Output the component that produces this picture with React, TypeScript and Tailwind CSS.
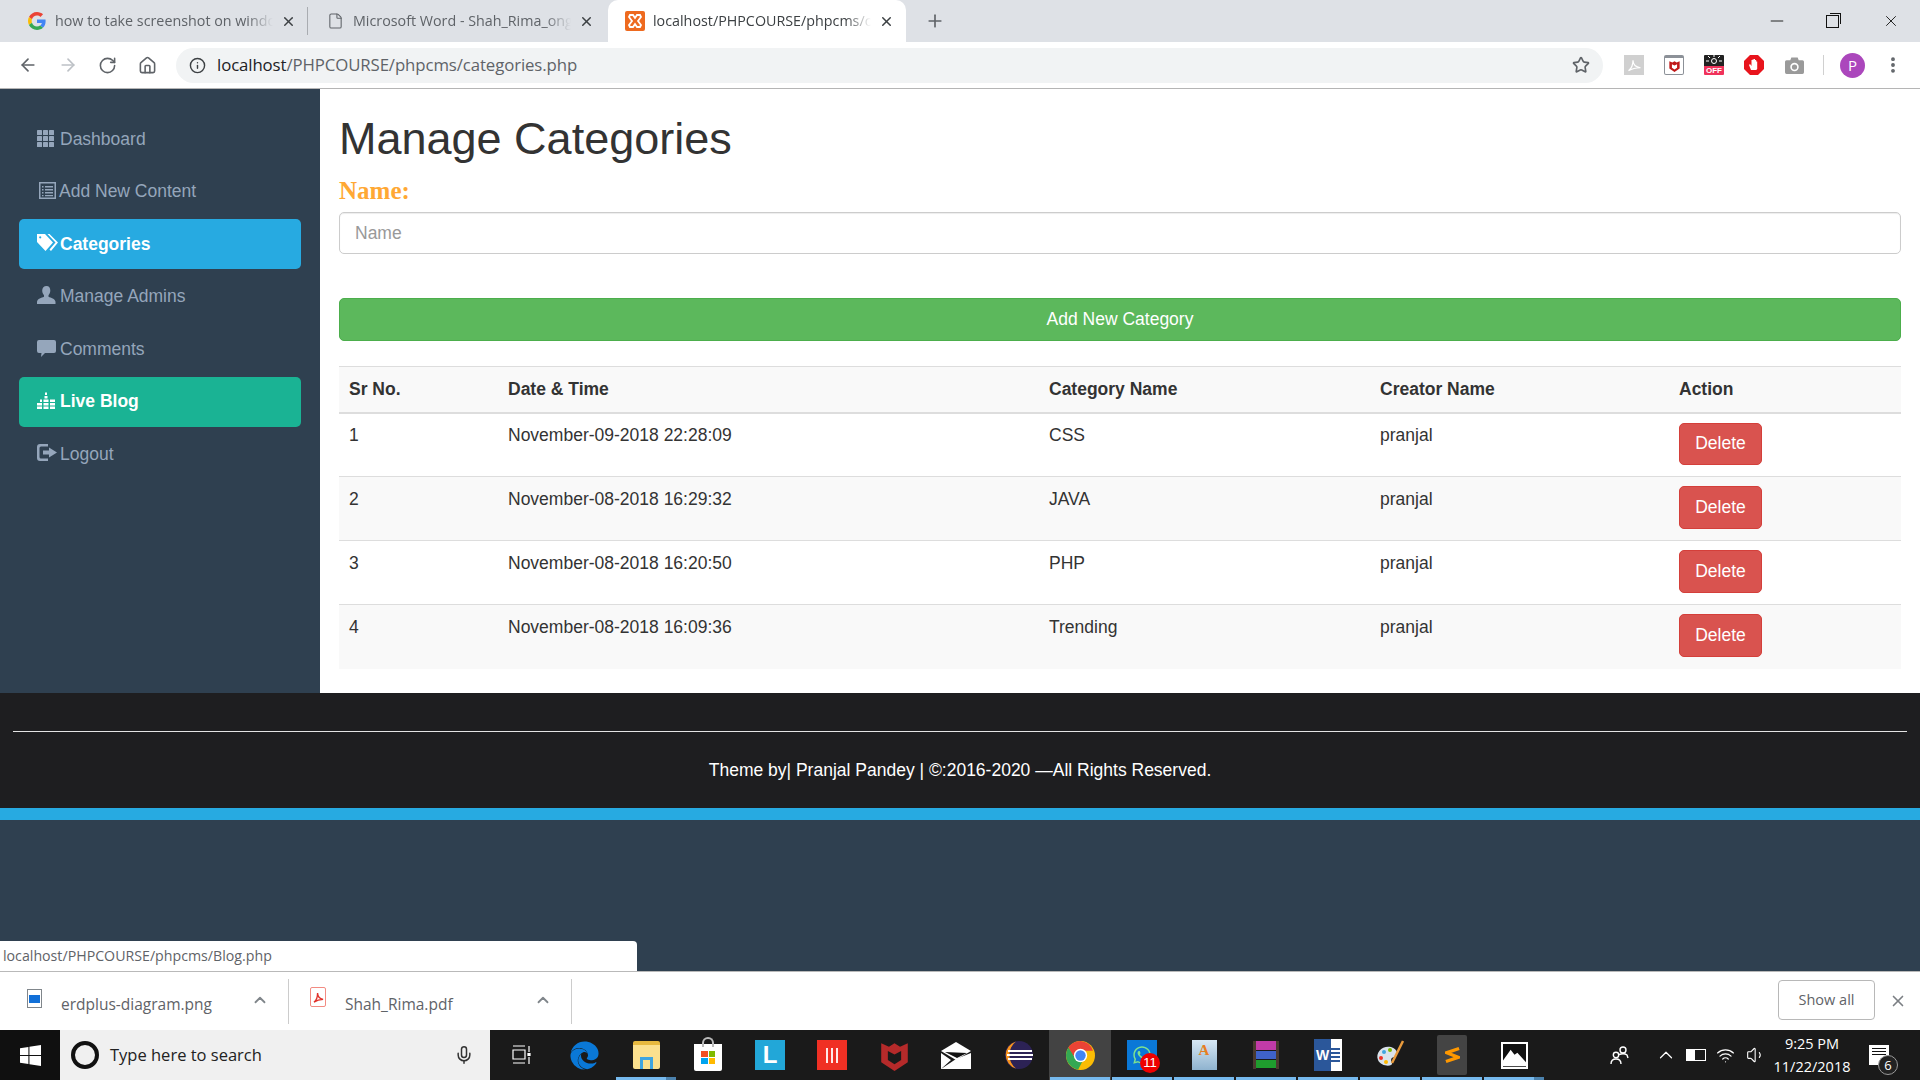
import React from 'react';
import { ArrowLeft, ArrowRight, RotateCw, Home, Info, Star, MoreVertical, X, Plus, Minus, ChevronUp, Mic, File, Wifi, Volume1 } from 'lucide-react';
import { FaEdge, FaWhatsapp } from 'react-icons/fa';

const rows = [
  { id: 1, date: 'November-09-2018 22:28:09', name: 'CSS' },
  { id: 2, date: 'November-08-2018 16:29:32', name: 'JAVA' },
  { id: 3, date: 'November-08-2018 16:20:50', name: 'PHP' },
  { id: 4, date: 'November-08-2018 16:09:36', name: 'Trending' },
];

const GoogleG = () => (
  <svg viewBox="0 0 48 48" className="w-[18px] h-[18px]">
    <path fill="#EA4335" d="M24 9.5c3.54 0 6.71 1.22 9.21 3.6l6.85-6.85C35.9 2.38 30.47 0 24 0 14.62 0 6.51 5.38 2.56 13.22l7.98 6.19C12.43 13.72 17.74 9.5 24 9.5z" />
    <path fill="#4285F4" d="M46.98 24.55c0-1.57-.15-3.09-.38-4.55H24v9.02h12.94c-.58 2.96-2.26 5.48-4.78 7.18l7.73 6c4.51-4.18 7.09-10.36 7.09-17.65z" />
    <path fill="#FBBC05" d="M10.53 28.59c-.48-1.45-.76-2.99-.76-4.59s.27-3.14.76-4.59l-7.98-6.19C.92 16.46 0 20.12 0 24c0 3.88.92 7.54 2.56 10.78l7.97-6.19z" />
    <path fill="#34A853" d="M24 48c6.48 0 11.93-2.13 15.89-5.81l-7.73-6c-2.15 1.45-4.92 2.3-8.16 2.3-6.26 0-11.57-4.22-13.47-9.91l-7.98 6.19C6.51 42.62 14.62 48 24 48z" />
  </svg>
);

const Xampp = () => (
  <svg viewBox="0 0 20 20" className="w-5 h-5">
    <rect width="20" height="20" rx="2" fill="#ee6a1f" />
    <path d="M5 4h3l2 3 2-3h3l1 2-3 4 3 4-1 2h-3l-2-3-2 3H5l-1-2 3-4-3-4z" fill="none" stroke="#fff" strokeWidth="1.8" />
  </svg>
);

const McAfeeShield = ({ className, color }: { className: string; color: string }) => (
  <svg viewBox="0 0 24 28" className={className}>
    <path d="M0 3l7 3 5-3 5 3 7-3v17l-12 8L0 20z M6 10v8l6 4 6-4v-8l-6 3z" fill={color} fillRule="evenodd" />
  </svg>
);

const Tab = ({ icon, title, active }: { icon: React.ReactNode; title: string; active?: boolean }) => (
  <div className={`flex items-center h-[42px] w-[298px] pl-[17px] pr-[12px] ${active ? 'bg-white rounded-t-[10px] text-[#3c4043]' : 'text-[#5f6368]'}`}>
    <div className="w-[20px] flex justify-center shrink-0">{icon}</div>
    <div className="ml-[8px] w-[218px] overflow-hidden whitespace-nowrap text-[14.3px] [mask-image:linear-gradient(to_right,black_88%,transparent)]">{title}</div>
    <X className="ml-[8px] w-[15px] h-[15px] shrink-0 text-[#3c4043]" strokeWidth={2.4} />
  </div>
);

const ExtSlot = ({ children }: { children: React.ReactNode }) => (
  <div className="w-[40px] flex justify-center items-center">{children}</div>
);

const BrowserChrome = () => (
  <div className="font-['Open_Sans',sans-serif] shrink-0">
    <div className="h-[42px] bg-[#dee1e6] flex items-center pl-[10px]">
      <Tab icon={<GoogleG />} title="how to take screenshot on windows" />
      <div className="w-px h-[28px] bg-[#a9acb1] -ml-[1px]" />
      <Tab icon={<File className="w-[17px] h-[20px] text-[#5f6368]" strokeWidth={1.5} />} title="Microsoft Word - Shah_Rima_ongoing" />
      <div className="w-[2px]" />
      <Tab active icon={<Xampp />} title="localhost/PHPCOURSE/phpcms/categories.php" />
      <Plus className="ml-[19px] w-[20px] h-[20px] text-[#5f6368]" strokeWidth={2} />
      <div className="flex-1" />
      <Minus className="w-[20px] h-[20px] text-[#111] mr-[39px]" strokeWidth={1.1} />
      <div className="relative w-[13px] h-[13px] border border-[#111] mr-[43px]">
        <div className="absolute -top-[3px] -right-[3px] w-[11px] h-[11px] border-t border-r border-[#111]" />
      </div>
      <X className="w-[18px] h-[18px] text-[#111] mr-[20px]" strokeWidth={1.2} />
    </div>
    <div className="h-[47px] bg-white border-b border-[#b5b5b5] flex items-center pl-[18px] pr-[15px]">
      <ArrowLeft className="w-[20px] h-[20px] text-[#5f6368]" />
      <ArrowRight className="ml-[20px] w-[20px] h-[20px] text-[#bdc1c6]" />
      <RotateCw className="ml-[20px] w-[19px] h-[19px] text-[#5f6368]" />
      <Home className="ml-[21px] w-[19px] h-[19px] text-[#5f6368]" />
      <div className="ml-[19px] w-[1427px] h-[35px] rounded-full bg-[#f1f3f4] flex items-center pl-[13px] pr-[13px]">
        <Info className="w-[17px] h-[17px] text-[#3c4043]" />
        <div className="ml-[11px] text-[16.8px] text-[#5f6368] tracking-[-0.1px]"><span className="text-[#202124]">localhost</span>/PHPCOURSE/phpcms/categories.php</div>
        <div className="flex-1" />
        <Star className="w-[18px] h-[18px] text-[#5f6368]" strokeWidth={2.2} />
      </div>
      <div className="ml-[11px] flex items-center">
        <ExtSlot>
          <div className="w-[20px] h-[20px] bg-[#d0d0d0] flex items-center justify-center">
            <svg viewBox="0 0 20 20" className="w-[15px] h-[15px]"><path d="M2 17c4-3 6-9 6-14 0 5 3 9 10 10-5 0-11 1-16 4z" fill="none" stroke="#fff" strokeWidth="1.6" /></svg>
          </div>
        </ExtSlot>
        <ExtSlot>
          <div className="w-[20px] h-[20px] bg-white border border-[#8c9198] border-t-[3px] rounded-[2px] flex items-center justify-center">
            <McAfeeShield className="w-[11px] h-[12px]" color="#c01818" />
          </div>
        </ExtSlot>
        <ExtSlot>
          <div className="w-[20px] h-[20px] flex flex-col overflow-hidden rounded-[1px]">
            <div className="h-[11px] bg-[#222] flex items-center justify-center">
              <svg viewBox="0 0 20 11" className="w-[20px] h-[11px]" stroke="#fff" strokeWidth="1" fill="none">
                <circle cx="10" cy="6" r="2.500" />
                <path d="M10 0v2M4 1l2 2M16 1l-2 2M2 6h3M15 6h3" />
              </svg>
            </div>
            <div className="h-[9px] bg-[#f0325b] text-white text-[8px] leading-[9px] font-bold text-center font-['Liberation_Sans',sans-serif]">OFF</div>
          </div>
        </ExtSlot>
        <ExtSlot>
          <svg viewBox="0 0 20 20" className="w-[20px] h-[20px]">
            <path d="M6 0h8l6 6v8l-6 6H6l-6-6V6z" fill="#e8141c" />
            <path d="M7 15l-2-5 1-1 1.500 2V5h1v-.5h1.200V4h1.300v1h1.200v1.500h1V14l-1 1z" fill="#fff" />
          </svg>
        </ExtSlot>
        <ExtSlot>
          <svg viewBox="0 0 18 16" className="w-[19px] h-[17px]">
            <path d="M1.500 3H5l1-2.500h6L13 3h3.500A1.500 1.500 0 0 1 18 4.500v10a1.500 1.500 0 0 1-1.500 1.500h-15A1.500 1.500 0 0 1 0 14.500v-10A1.500 1.500 0 0 1 1.500 3z" fill="#9a9a9a" />
            <circle cx="9" cy="9.500" r="4" fill="#fff" />
            <circle cx="9" cy="9.500" r="2.500" fill="#9a9a9a" />
          </svg>
        </ExtSlot>
      </div>
      <div className="ml-[9px] w-px h-[20px] bg-[#d0d0d0]" />
      <div className="ml-[16px] w-[25px] h-[25px] rounded-full bg-[#ab47bc] text-white text-[15px] flex items-center justify-center">P</div>
      <MoreVertical className="ml-[18px] w-[20px] h-[20px] text-[#5f6368]" strokeWidth={2.6} />
    </div>
  </div>
);

const ThIcon = () => (
  <svg viewBox="0 0 17 17" className="w-[17px] h-[17px] -mt-[2px]" fill="currentColor">
    {[0, 6, 12].map((y) => [0, 6, 12].map((x) => <rect key={`${x}-${y}`} x={x} y={y} width="5" height="5" rx="0.6" />))}
  </svg>
);
const ListAltIcon = () => (
  <svg viewBox="0 0 17 17" className="w-[17px] h-[17px] ml-[2px] -mt-[2px]" fill="currentColor">
    <path fillRule="evenodd" d="M0 0h17v17H0z M1.500 1.500v14h14v-14z" />
    <path d="M3 4h1.500v1.500H3zM6 4h8v1.500H6zM3 7h1.500v1.500H3zM6 7h8v1.500H6zM3 10h1.500v1.500H3zM6 10h8v1.500H6zM3 13h1.500v1.200H3zM6 13h8v1.200H6z" />
  </svg>
);
const TagsIcon = () => (
  <svg viewBox="0 0 22 17" className="w-[22px] h-[17px] -mt-[3px]" fill="currentColor">
    <path fillRule="evenodd" d="M0 0h8l8 8.500-7.500 8.500L0 8z M3.200 2.200a1.100 1.100 0 1 0 .01 0z" />
    <path d="M10.500 0h2l8.500 8.500-7 8.500-1.500-1.500 6-7z" />
  </svg>
);
const UserIcon = () => (
  <svg viewBox="0 0 19 18" className="w-[19px] h-[18px] -mt-[3px]" fill="currentColor">
    <path d="M9.500 0c2.600 0 3.800 2 3.800 4.500 0 2-.9 3.700-1.800 4.700v1.500c2.500 1 6.500 2 7 5V18H0v-2.300c.5-3 4.500-4 7-5V9.200C6.100 8.200 5.200 6.500 5.200 4.500 5.200 2 6.900 0 9.500 0z" />
  </svg>
);
const CommentIcon = () => (
  <svg viewBox="0 0 19 18" className="w-[19px] h-[18px] -mt-[1px]" fill="currentColor">
    <path d="M2 0h15a2 2 0 0 1 2 2v9a2 2 0 0 1-2 2H8l-4 4 .5-4H2a2 2 0 0 1-2-2V2a2 2 0 0 1 2-2z" />
  </svg>
);
const EqualizerIcon = () => (
  <svg viewBox="0 0 18 17" className="w-[18px] h-[17px] -mt-[2px]" fill="currentColor">
    <path d="M0 11h5v2.500H0zM0 14.500h5V17H0zM6.500 7.500h5V10h-5zM6.500 11h5v2.500h-5zM6.500 14.500h5V17h-5zM7.500 4h3v2.500h-3zM8 0.500h2V3H8zM13 7.500h5V10h-5zM13 11h5v2.500h-5zM13 14.500h5V17h-5z M3 7.500h2V10H3z" />
  </svg>
);
const LogoutIcon = () => (
  <svg viewBox="0 0 20 17" className="w-[20px] h-[17px] -mt-[3px]" fill="currentColor">
    <path d="M3 0h8v2.500H4a1.500 1.500 0 0 0-1.500 1.500v9A1.500 1.500 0 0 0 4 14.500h7V17H3a3 3 0 0 1-3-3V3a3 3 0 0 1 3-3z" />
    <path d="M12 3.500l8 5-8 5v-3H6v-4h6z" />
  </svg>
);

const navItems = [
  { label: 'Dashboard', icon: <ThIcon />, cls: 'text-[#95a6bb]', gap: 'ml-[6px]' },
  { label: 'Add New Content', icon: <ListAltIcon />, cls: 'text-[#95a6bb]', gap: 'ml-[3px]' },
  { label: 'Categories', icon: <TagsIcon />, cls: 'bg-[#27aae1] text-white font-bold', gap: 'ml-[1px]' },
  { label: 'Manage Admins', icon: <UserIcon />, cls: 'text-[#95a6bb]', gap: 'ml-[4px]' },
  { label: 'Comments', icon: <CommentIcon />, cls: 'text-[#95a6bb]', gap: 'ml-[4px]' },
  { label: 'Live Blog', icon: <EqualizerIcon />, cls: 'bg-[#1ab394] text-white font-bold', gap: 'ml-[5px]' },
  { label: 'Logout', icon: <LogoutIcon />, cls: 'text-[#95a6bb]', gap: 'ml-[3px]' },
];

const Sidebar = () => (
  <div className="w-[320px] shrink-0 bg-[#2f4050] pt-[25px] px-[19px] flex flex-col gap-[2.5px]">
    {navItems.map((item) => (
      <div key={item.label} className={`h-[50px] rounded-[5px] flex items-center pl-[18px] text-[17.5px] ${item.cls}`}>
        {item.icon}
        <span className={item.gap}>{item.label}</span>
      </div>
    ))}
  </div>
);

const CategoryTable = () => (
  <table className="w-full table-fixed border-collapse text-[17.5px] text-[#333] mt-[25px]">
    <colgroup>
      <col className="w-[159px]" />
      <col className="w-[541px]" />
      <col className="w-[331px]" />
      <col className="w-[299px]" />
      <col />
    </colgroup>
    <thead>
      <tr className="h-[46px] bg-[#f9f9f9] border-t border-b-2 border-[#ddd] text-left">
        <th className="px-[10px]">Sr No.</th>
        <th className="px-[10px]">Date &amp; Time</th>
        <th className="px-[10px]">Category Name</th>
        <th className="px-[10px]">Creator Name</th>
        <th className="px-[10px]">Action</th>
      </tr>
    </thead>
    <tbody>
      {rows.map((row) => (
        <tr key={row.id} className={`h-[64px] border-t border-[#ddd] first:border-t-0 ${row.id % 2 === 0 ? 'bg-[#f9f9f9]' : 'bg-white'}`}>
          <td className="px-[10px] pt-[9.5px] align-top leading-[25px]">{row.id}</td>
          <td className="px-[10px] pt-[9.5px] align-top leading-[25px]">{row.date}</td>
          <td className="px-[10px] pt-[9.5px] align-top leading-[25px]">{row.name}</td>
          <td className="px-[10px] pt-[9.5px] align-top leading-[25px]">pranjal</td>
          <td className="px-[10px] pt-[9px] align-top leading-[25px]">
            <button className="w-[83px] h-[42.500px] rounded-[5px] bg-[#d9534f] border border-[#d43f3a] text-white">Delete</button>
          </td>
        </tr>
      ))}
    </tbody>
  </table>
);

const Content = () => (
  <div className="flex-1 bg-white px-[19px] pt-[25px]">
    <h1 className="text-[45px] leading-[50px] text-[#333]">Manage Categories</h1>
    <div className="mt-[9px] h-[36px] leading-[36px] text-[25px] font-bold text-[#ffa834] font-['Liberation_Serif',serif]">Name:</div>
    <input
      placeholder="Name"
      className="mt-[3px] w-full h-[42px] rounded-[5px] border border-[#ccc] px-[15px] text-[17.5px] placeholder:text-[#999] shadow-[inset_0_1px_1px_rgba(0,0,0,0.075)]"
    />
    <button className="mt-[44px] w-full h-[43px] rounded-[5px] bg-[#5cb85c] border border-[#4cae4c] text-white text-[17.5px]">Add New Category</button>
    <CategoryTable />
  </div>
);

const Footer = () => (
  <div className="shrink-0">
    <div className="h-[115px] bg-[#1e1e20] pt-[38px] text-white">
      <div className="mx-[13px] h-px bg-[#e4e4e4]" />
      <div className="mt-[26px] text-center text-[17.5px] leading-[25px]">Theme by| Pranjal Pandey | ©:2016-2020 —All Rights Reserved.</div>
    </div>
    <div className="h-[12px] bg-[#27aae1]" />
  </div>
);

const DownloadItem = ({ icon, name, width }: { icon: React.ReactNode; name: string; width: string }) => (
  <div className={`h-[45px] flex items-center border-r border-[#ccc] ${width}`}>
    {icon}
    <span className="text-[15.500px] text-[#5f6368] ml-[19px] flex-1 mt-[7px]">{name}</span>
    <ChevronUp className="w-[18px] h-[18px] text-[#80868b] mr-[19px] -mt-[3px]" strokeWidth={2.4} />
  </div>
);

const DownloadBar = () => (
  <div className="h-[59px] shrink-0 bg-white border-t border-[#b9b9b9] flex items-center pl-[27px] font-['Open_Sans',sans-serif]">
    <DownloadItem
      width="w-[262px]"
      name="erdplus-diagram.png"
      icon={
        <div className="w-[15px] h-[19px] -mt-[6px] border border-[#80868b] flex items-center justify-center pt-[1px]">
          <div className="w-[11px] h-[8px] bg-[#1270d8]" />
        </div>
      }
    />
    <div className="w-[21px]" />
    <DownloadItem
      width="w-[262px]"
      name="Shah_Rima.pdf"
      icon={
        <div className="w-[16px] h-[20px] -mt-[8px] border border-[#f28b82] rounded-[2px] flex items-center justify-center">
          <svg viewBox="0 0 12 12" className="w-[11px] h-[11px]"><path d="M1 11c3-2 4-6 4-10 0 4 2 6 6 7-4 0-7 1-10 3z" fill="none" stroke="#e0312a" strokeWidth="1.500" /></svg>
        </div>
      }
    />
    <div className="flex-1" />
    <div className="w-[97px] h-[40px] -mt-[2px] rounded-[4px] border border-[#b8b8b8] text-[14.500px] text-[#5f6368] flex items-center justify-center">Show all</div>
    <X className="ml-[14px] mr-[13px] w-[18px] h-[18px] text-[#7b7f84]" strokeWidth={2.2} />
  </div>
);

const TaskIcon = ({ children, running, active, split }: { children: React.ReactNode; running?: boolean; active?: boolean; split?: boolean }) => (
  <div className={`relative w-[62px] h-[50px] flex items-center justify-center ${active ? 'bg-[#434343]' : ''}`}>
    {children}
    {running && <div className="absolute bottom-0 left-[1px] right-[1px] h-[3px] bg-[#76b9ed]" />}
    {split && <div className="absolute bottom-0 right-[1px] w-[10px] h-[3px] bg-[#4c82ad]" />}
  </div>
);

const ChromeLogo = () => (
  <svg viewBox="0 0 24 24" className="w-[29px] h-[29px]">
    <circle cx="12" cy="12" r="12" fill="#fbbc05" />
    <path d="M2 5.400A12 12 0 0 0 10 23.800L15 14H8.800z" fill="#34a853" />
    <path d="M12 0A12 12 0 0 0 2 5.400L7 13.500 9 8h13.300A12 12 0 0 0 12 0z" fill="#ea4335" />
    <circle cx="12" cy="12" r="5.500" fill="#fff" />
    <circle cx="12" cy="12" r="4.300" fill="#4285f4" />
  </svg>
);

const Taskbar = () => (
  <div className="h-[50px] shrink-0 bg-[#1a1a1a] flex items-center text-white font-['Open_Sans',sans-serif]">
    <div className="w-[60px] h-full bg-[#101010] flex items-center justify-center">
      <svg viewBox="0 0 20 20" className="w-[21px] h-[21px]" fill="#fff"><path d="M0 3l8-1.200V9.500H0zM9 1.600L20 0v9.500H9zM0 10.500h8v7.700L0 17zM9 10.500h11V20L9 18.400z" /></svg>
    </div>
    <div className="w-[430px] h-full bg-[#f0f0f0] flex items-center pl-[11px] text-[#222]">
      <div className="w-[28px] h-[28px] rounded-full border-[4px] border-[#111]" />
      <span className="ml-[11px] text-[16.500px]">Type here to search</span>
      <div className="flex-1" />
      <Mic className="w-[20px] h-[24px] text-[#333] mr-[16px]" strokeWidth={1.8} />
    </div>
    <div className="w-[63px] flex justify-center">
      <svg viewBox="0 0 20 20" className="w-[20px] h-[20px]" fill="none" stroke="#fff" strokeWidth="1.200"><path d="M1 1h12M1 5h12v9H1zM1 18h12M17 1v6M17 12v7" /><path d="M16 8.500h2v2h-2z" fill="#fff" /></svg>
    </div>
    <TaskIcon><FaEdge className="w-[29px] h-[31px] text-[#0a78d7]" /></TaskIcon>
    <TaskIcon running split>
      <div className="relative w-[27px] h-[28px] rounded-[2px] bg-[#fbe08e] border-t-[4px] border-[#e7b93f]">
        <div className="absolute bottom-0 left-[7px] w-[13px] h-[12px] bg-[#3fa5e0] border-[3px] border-b-0 border-[#3fa5e0] [box-shadow:inset_0_-7px_0_3px_#fbe08e]" />
      </div>
    </TaskIcon>
    <TaskIcon>
      <div className="relative w-[28px] h-[27px] bg-white mt-[4px] grid grid-cols-2 gap-[1px] p-[7px] rounded-b-[2px]">
        <div className="absolute -top-[7px] left-[8px] w-[12px] h-[10px] border-[2px] border-b-0 border-[#bbb] rounded-t-[6px]" />
        <div className="bg-[#f25022]" /><div className="bg-[#7fba00]" /><div className="bg-[#00a4ef]" /><div className="bg-[#ffb900]" />
      </div>
    </TaskIcon>
    <TaskIcon>
      <div className="w-[30px] h-[30px] bg-[#22a7d8] flex items-center justify-center text-white font-bold text-[24px] font-['Liberation_Sans',sans-serif]">L</div>
    </TaskIcon>
    <TaskIcon>
      <div className="w-[30px] h-[30px] bg-[#f03024] flex items-center justify-center gap-[3px]">
        <div className="w-[2px] h-[15px] bg-white/90" /><div className="w-[2px] h-[15px] bg-white/90" /><div className="w-[2px] h-[15px] bg-white/90" />
      </div>
    </TaskIcon>
    <TaskIcon><McAfeeShield className="w-[27px] h-[31px]" color="#b52a2a" /></TaskIcon>
    <TaskIcon>
      <svg viewBox="0 0 30 27" className="w-[30px] h-[27px]"><path d="M0 9L15 0l15 9-15 9z" fill="#fff" /><path d="M0 11l10 7-10 9zM30 11v16H0l15-10z" fill="#fff" /><path d="M4 10L26 11 16 16z" fill="#111" /></svg>
    </TaskIcon>
    <TaskIcon>
      <svg viewBox="0 0 30 30" className="w-[30px] h-[30px]">
        <circle cx="16" cy="15" r="14" fill="#2c2255" />
        <path d="M13 1.500A14 14 0 0 0 13 28.500 17 17 0 0 1 13 1.500z" fill="#f7941e" />
        <path d="M5 11h24M4 15h26M5 19h24" stroke="#fff" strokeWidth="1.800" />
      </svg>
    </TaskIcon>
    <TaskIcon running active><ChromeLogo /></TaskIcon>
    <TaskIcon running>
      <div className="relative w-[30px] h-[30px] bg-[#0a78d7] flex items-center justify-center">
        <FaWhatsapp className="w-[20px] h-[20px] text-[#7ee28f]" />
        <div className="absolute -bottom-[3px] -right-[3px] w-[20px] h-[20px] rounded-full bg-[#ee0000] text-white text-[13px] leading-[20px] text-center font-['Liberation_Sans',sans-serif]">11</div>
      </div>
    </TaskIcon>
    <TaskIcon running>
      <div className="w-[25px] h-[30px] bg-gradient-to-b from-[#d8e8f4] to-[#8fb3cf] flex items-start justify-center text-[#e67e22] text-[15px] font-bold leading-[20px] font-['Liberation_Serif',serif]">A</div>
    </TaskIcon>
    <TaskIcon running>
      <div className="w-[26px] h-[28px] flex flex-col border-x-[3px] border-[#4a3a30] gap-[1px]">
        <div className="h-[9px] bg-[#c23ba8]" /><div className="h-[8px] bg-[#3f62c8]" /><div className="h-[8px] bg-[#1f9d2e]" />
      </div>
    </TaskIcon>
    <TaskIcon running>
      <div className="w-[28px] h-[32px] relative bg-white flex items-center justify-end pr-[2px]">
        <div className="w-[11px] flex flex-col gap-[2px]"><div className="h-[2px] bg-[#2b579a]" /><div className="h-[2px] bg-[#2b579a]" /><div className="h-[2px] bg-[#2b579a]" /><div className="h-[2px] bg-[#2b579a]" /></div>
        <div className="absolute left-0 top-0 w-[17px] h-[32px] bg-[#2b579a] text-white text-[14px] leading-[32px] text-center font-bold font-['Liberation_Sans',sans-serif]">W</div>
      </div>
    </TaskIcon>
    <TaskIcon running>
      <svg viewBox="0 0 30 30" className="w-[30px] h-[30px]">
        <path d="M3 20C0 12 8 5 16 7c7 2 8 9 3 10-4 1-3 4-2 6 1 4-11 4-14-3z" fill="#d9e2ea" />
        <circle cx="9" cy="12" r="2" fill="#3fa5e0" /><circle cx="15" cy="10" r="2" fill="#7fba00" /><circle cx="6" cy="18" r="2" fill="#f03024" /><circle cx="11" cy="22" r="2" fill="#ffb900" />
        <path d="M28 1l-11 22" stroke="#e89a3c" strokeWidth="2.500" />
      </svg>
    </TaskIcon>
    <TaskIcon running>
      <div className="w-[30px] h-[40px] bg-[#444] rounded-[2px] flex items-center justify-center">
        <svg viewBox="0 0 16 20" className="w-[15px] h-[20px]" fill="none" stroke="#ff9800" strokeWidth="3.500" strokeLinejoin="miter"><path d="M15 3L2 7.500l12 5L1 17" /></svg>
      </div>
    </TaskIcon>
    <TaskIcon running split>
      <div className="w-[27px] h-[27px] bg-[#111] border-[2px] border-white flex items-end overflow-hidden">
        <svg viewBox="0 0 24 20" className="w-full"><path d="M0 20V14L8 3l4 5 3-2 9 10v4z" fill="#fff" /></svg>
      </div>
    </TaskIcon>
    <div className="flex-1" />
    <svg viewBox="0 0 20 20" className="w-[20px] h-[20px] mr-[25px]" fill="none" stroke="#fff" strokeWidth="1.400">
      <circle cx="13" cy="5" r="3" />
      <circle cx="6" cy="10" r="2.700" />
      <path d="M9 9.500c3-1 6-1 8 .5l1 3M1 19c0-3 2-5 5-5s5 2 5 5" />
    </svg>
    <ChevronUp className="w-[22px] h-[22px] mr-[9px]" strokeWidth={1.300} />
    <div className="relative w-[20px] h-[12px] border border-white mr-[10px]">
      <div className="absolute left-0 top-0 bottom-0 w-[8px] bg-white" />
    </div>
    <Wifi className="w-[19px] h-[19px] mr-[11px]" strokeWidth={1.500} />
    <Volume1 className="w-[20px] h-[20px] mr-[6px]" strokeWidth={1.300} />
    <div className="w-[80px] text-center text-[14.500px] leading-[23px]">
      <div>9:25 PM</div>
      <div>11/22/2018</div>
    </div>
    <div className="relative w-[68px] h-full flex items-center pl-[17px]">
      <div className="w-[20px] h-[20px] bg-white flex flex-col gap-[2px] p-[3px]">
        <div className="h-[1px] bg-[#111]" /><div className="h-[1px] bg-[#111]" /><div className="h-[1px] bg-[#111]" />
      </div>
      <div className="absolute left-[26px] top-[25px] w-[20px] h-[20px] rounded-full bg-[#222] border border-[#999] text-[13px] leading-[18px] text-center">6</div>
    </div>
  </div>
);

export default function App() {
  return (
    <div className="w-[1920px] h-[1080px] overflow-hidden flex flex-col font-['Liberation_Sans',Arial,sans-serif]">
      <BrowserChrome />
      <div className="h-[604px] shrink-0 flex">
        <Sidebar />
        <Content />
      </div>
      <Footer />
      <div className="relative flex-1 bg-[#2f4050]">
        <div className="absolute left-0 bottom-0 w-[637px] h-[30px] bg-white rounded-tr-[4px] pl-[3px] leading-[30px] text-[14.200px] text-[#5f6368] font-['Open_Sans',sans-serif]">localhost/PHPCOURSE/phpcms/Blog.php</div>
      </div>
      <DownloadBar />
      <Taskbar />
    </div>
  );
}
